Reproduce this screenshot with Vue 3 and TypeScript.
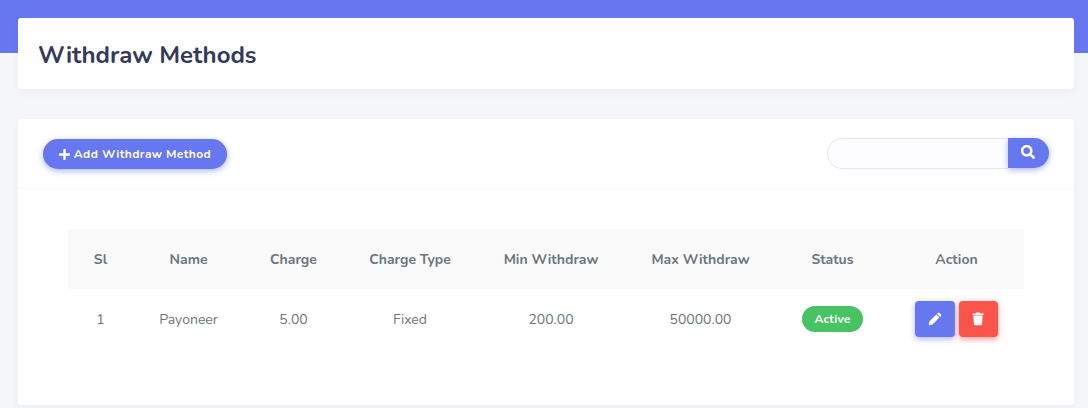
<script setup lang="ts">
interface Method {
  id: number
  name: string
  charge: string
  type: string
  min: string
  max: string
  status: string
}

const columns: { key: string; label: string; width: number }[] = [
  { key: 'sl', label: 'Sl', width: 65 },
  { key: 'name', label: 'Name', width: 111 },
  { key: 'charge', label: 'Charge', width: 99 },
  { key: 'type', label: 'Charge Type', width: 134 },
  { key: 'min', label: 'Min Withdraw', width: 148 },
  { key: 'max', label: 'Max Withdraw', width: 151 },
  { key: 'status', label: 'Status', width: 113 },
  { key: 'action', label: 'Action', width: 135 },
]

const methods: Method[] = [
  { id: 1, name: 'Payoneer', charge: '5.00', type: 'Fixed', min: '200.00', max: '50000.00', status: 'Active' },
]
</script>

<template>
  <main class="page">
    <header class="card title-card">
      <h1>Withdraw Methods</h1>
    </header>

    <section class="card list-card">
      <div class="card-header">
        <button class="add-btn" type="button">
          <svg width="11" height="11" viewBox="0 0 11 11"><path d="M5.5 1v9M1 5.5h9" fill="none" stroke="#fff" stroke-width="2.4" stroke-linecap="round" /></svg>
          <span>Add Withdraw Method</span>
        </button>
        <form class="search" @submit.prevent>
          <input type="text" aria-label="Search" />
          <button type="submit" aria-label="Search">
            <svg width="14" height="14" viewBox="0 0 512 512"><path fill="#fff" stroke="#fff" stroke-width="10" d="M505 442.700 405.300 343c-4.500-4.500-10.600-7-17-7H372c27.600-35.300 44-79.700 44-128C416 93.100 322.900 0 208 0S0 93.100 0 208s93.100 208 208 208c48.300 0 92.700-16.400 128-44v16.300c0 6.400 2.500 12.500 7 17l99.700 99.700c9.400 9.400 24.600 9.400 33.900 0l28.300-28.300c9.400-9.400 9.400-24.600.1-34zM208 336c-70.700 0-128-57.200-128-128 0-70.700 57.200-128 128-128 70.700 0 128 57.200 128 128 0 70.700-57.200 128-128 128z" /></svg>
          </button>
        </form>
      </div>

      <div class="card-body">
        <table>
          <colgroup>
            <col v-for="c in columns" :key="c.key" :style="{ width: c.width + 'px' }" />
          </colgroup>
          <thead>
            <tr>
              <th v-for="c in columns" :key="c.key">{{ c.label }}</th>
            </tr>
          </thead>
          <tbody>
            <tr v-for="m in methods" :key="m.id">
              <td>{{ m.id }}</td>
              <td>{{ m.name }}</td>
              <td>{{ m.charge }}</td>
              <td>{{ m.type }}</td>
              <td>{{ m.min }}</td>
              <td>{{ m.max }}</td>
              <td><div class="center"><span class="badge">{{ m.status }}</span></div></td>
              <td>
                <div class="center actions">
                  <button class="edit" type="button" aria-label="Edit">
                    <svg width="14" height="14" viewBox="0 0 14 14"><path fill="#fff" d="M8.300 2.500 11.400 5.600 4.600 12.400 1.500 13.200Q.6 13.400.8 12.500L1.500 9.300ZM9 1.800 9.900.9Q10.800.2 11.700 1L12.900 2.200Q13.700 3.100 13 4L12.100 4.900Z" /></svg>
                  </button>
                  <button class="delete" type="button" aria-label="Delete">
                    <svg width="12" height="14" viewBox="0 0 12 14"><path fill="#fff" d="M.5 1.500H3.700L4.300.6H7.700L8.300 1.500H11.500V2.900H.5ZM1.300 3.500H10.700L10.100 12.100Q10 13.300 8.900 13.300H3.100Q2 13.300 1.900 12.100Z" /></svg>
                  </button>
                </div>
              </td>
            </tr>
          </tbody>
        </table>
      </div>
    </section>
  </main>
</template>

<style>
body {
  margin: 0;
  overflow: hidden;
}
</style>

<style scoped>
* {
  box-sizing: border-box;
}
.page {
  height: 408px;
  padding: 18px 14px 0 18px;
  overflow: hidden;
  background: linear-gradient(#6777ef 53px, #f4f6f9 53px);
  font-family: Nunito, Lato, "Open Sans", sans-serif;
  color: #6c757d;
}
.card {
  background: #fff;
  border-radius: 3px;
  box-shadow: 0 4px 8px rgba(0, 0, 0, 0.03);
}
.title-card {
  display: flex;
  align-items: center;
  height: 71px;
  padding: 2px 20px 0;
  margin-bottom: 30px;
}
h1 {
  margin: 0;
  font-size: 24px;
  line-height: 30px;
  font-weight: 700;
  color: #34395e;
  white-space: nowrap;
}
.list-card {
  height: 286px;
}
.card-header {
  display: flex;
  align-items: center;
  justify-content: space-between;
  height: 70px;
  padding: 0 25px;
  border-bottom: 1px solid #f9f9f9;
}
button {
  display: flex;
  align-items: center;
  justify-content: center;
  border: 0;
  padding: 0;
  font-family: inherit;
  color: #fff;
  background: #6777ef;
  box-shadow: 0 2px 6px #acb5f6;
}
.add-btn {
  width: 184px;
  height: 30px;
  margin-top: 1px;
  gap: 4px;
  border-radius: 15px;
  font-size: 12px;
  font-weight: 700;
  letter-spacing: 0.39px;
  white-space: nowrap;
}
.search {
  display: flex;
  align-items: flex-start;
}
.search input {
  width: 181px;
  height: 31px;
  padding: 0 15px;
  border: 1px solid #e4e6fc;
  border-right: 0;
  border-radius: 16px 0 0 16px;
  background: #fdfdff;
  outline: 0;
}
.search button {
  width: 41px;
  height: 30px;
  padding: 0 1px 2px 0;
  border-radius: 0 15px 15px 0;
}
.card-body {
  padding: 40px 50px;
}
table {
  width: 956px;
  table-layout: fixed;
  border-collapse: collapse;
  font-size: 14px;
  text-align: center;
}
th,
td {
  height: 60px;
  padding: 0;
  white-space: nowrap;
}
th {
  background: #fafafa;
  font-weight: 700;
}
.center {
  display: flex;
  align-items: center;
  justify-content: center;
}
.badge {
  width: 61px;
  height: 26px;
  border-radius: 13px;
  background: #47c363;
  color: #fff;
  font-size: 12px;
  line-height: 26px;
  font-weight: 700;
  letter-spacing: 0.15px;
}
.actions {
  gap: 4px;
}
.actions button {
  width: 40px;
  height: 36px;
  border-radius: 4px;
}
.actions .delete {
  width: 39px;
  padding-right: 1px;
  background: #fc544b;
  box-shadow: 0 2px 6px #fd9b96;
}
</style>
